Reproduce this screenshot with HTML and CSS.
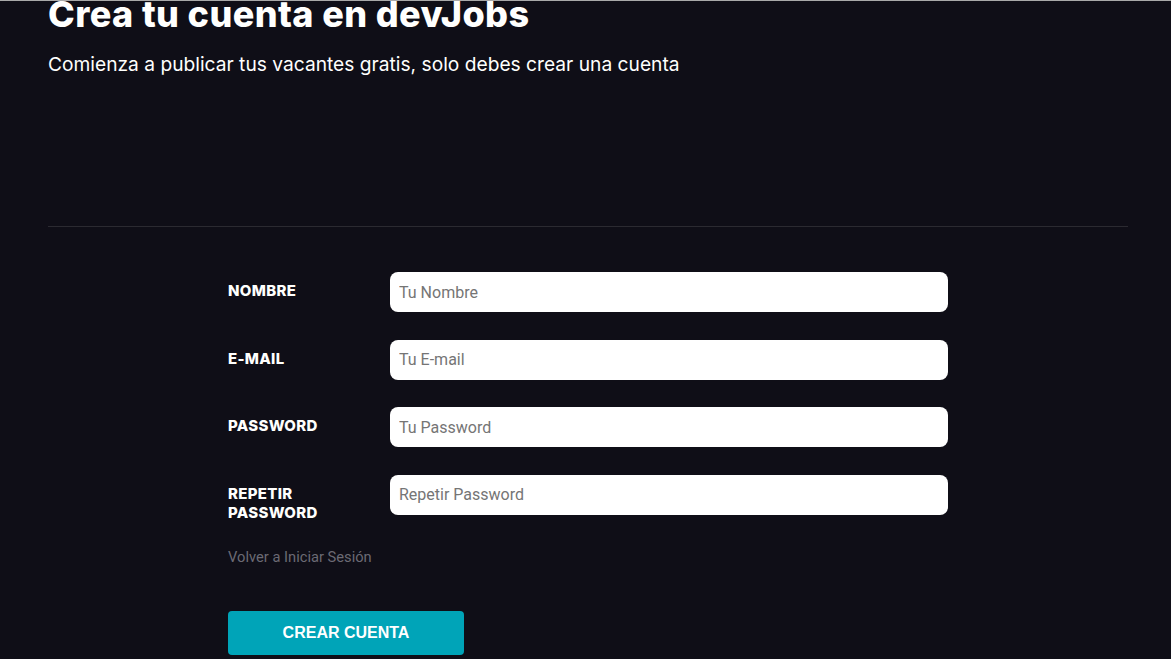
FILE: index.html
```html
<!DOCTYPE html>
<html lang="es">
<head>
<meta charset="utf-8">
<title>Crea tu cuenta en devJobs</title>
<link rel="stylesheet" href="styles.css">
</head>
<body>
<main class="page">
  <header class="hero">
    <h1 class="hero-title">Crea tu cuenta en devJobs</h1>
    <p class="hero-text">Comienza a publicar tus vacantes gratis, solo debes crear una cuenta</p>
  </header>
  <hr class="divider">
  <form class="form">
    <div class="field">
      <label class="field-label" for="nombre">Nombre</label>
      <input class="field-input" id="nombre" type="text" placeholder="Tu Nombre">
    </div>
    <div class="field">
      <label class="field-label" for="email">E-mail</label>
      <input class="field-input" id="email" type="email" placeholder="Tu E-mail">
    </div>
    <div class="field">
      <label class="field-label" for="password">Password</label>
      <input class="field-input" id="password" type="password" placeholder="Tu Password">
    </div>
    <div class="field">
      <label class="field-label" for="password2">Repetir<br>Password</label>
      <input class="field-input" id="password2" type="password" placeholder="Repetir Password">
    </div>
    <a class="back-link" href="#">Volver a Iniciar Sesión</a>
    <button class="submit" type="button">Crear Cuenta</button>
  </form>
</main>
</body>
</html>
```
FILE: styles.css
```css
html, body {
  margin: 0;
  padding: 0;
  background: #0f0e17;
  height: 100%;
  overflow: hidden;
}
body {
  border-top: 1px solid #a9a9a9;
  box-sizing: border-box;
  font-family: "Inter", "Roboto", sans-serif;
  color: #fffffe;
}
.page {
  width: 1080px;
  padding: 0 48px;
}
.hero {
  height: 234.1px;
  margin-top: -9.1px;
}
.hero-title {
  margin: 0;
  font-size: 36px;
  font-weight: 800;
  line-height: 44px;
  letter-spacing: 0.4px;
}
.hero-text {
  margin: 15.2px 0 0;
  font-size: 19.2px;
  line-height: 26px;
  font-weight: 400;
}
.divider {
  margin: 0;
  border: 0;
  border-top: 1px solid #2b2a31;
}
.form {
  width: 720px;
  margin: 45px auto 0;
  display: flex;
  flex-direction: column;
  align-items: flex-start;
}
.field {
  display: grid;
  grid-template-columns: 162px 1fr;
  width: 100%;
  margin-bottom: 27.5px;
}
.field-label {
  padding-top: 9px;
  font-size: 15px;
  line-height: 19px;
  font-weight: 800;
  letter-spacing: 0.3px;
  text-transform: uppercase;
}
.field-input {
  height: 40px;
  box-sizing: border-box;
  border: 0;
  border-radius: 8px;
  padding: 0 9px;
  font-family: "Roboto", sans-serif;
  font-size: 16px;
  background: #fff;
  outline: none;
}
.field-input::placeholder {
  color: #757575;
}
.back-link {
  margin-top: -1px;
  font-family: "Roboto", sans-serif;
  font-size: 14.7px;
  color: #6b6a74;
  text-decoration: none;
}
.submit {
  margin-top: 45px;
  width: 236px;
  height: 44px;
  border: 0;
  border-radius: 4px;
  background: #00a4b8;
  color: #fff;
  font-family: "Liberation Sans", Arial, sans-serif;
  font-weight: 700;
  font-size: 16px;
  text-transform: uppercase;
}
```
